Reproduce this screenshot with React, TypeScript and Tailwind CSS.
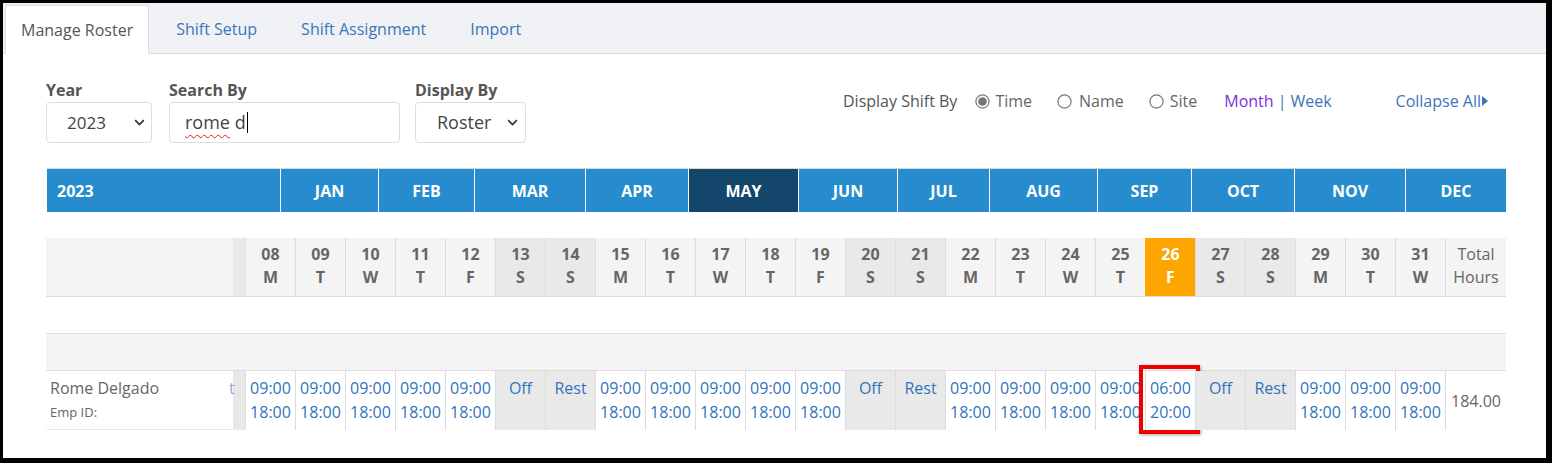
import React from "react";

const MONTHS = [
  { label: "JAN", w: "w-[98px]" },
  { label: "FEB", w: "w-[96px]" },
  { label: "MAR", w: "w-[111px]" },
  { label: "APR", w: "w-[103px]" },
  { label: "MAY", w: "w-[110px]", active: true },
  { label: "JUN", w: "w-[99px]" },
  { label: "JUL", w: "w-[92px]" },
  { label: "AUG", w: "w-[108px]" },
  { label: "SEP", w: "w-[94px]" },
  { label: "OCT", w: "w-[103px]" },
  { label: "NOV", w: "w-[111px]" },
  { label: "DEC", w: "w-[101px]" },
];

const WEEK = ["M", "T", "W", "T", "F", "S", "S"];

type Day = { date: string; dow: string; weekend: boolean; today: boolean; shift: string[] };

const DAYS: Day[] = Array.from({ length: 24 }, (_, i) => {
  const n = i + 8;
  const dow = WEEK[i % 7];
  const weekend = i % 7 >= 5;
  let shift = ["09:00", "18:00"];
  if (i % 7 === 5) shift = ["Off"];
  if (i % 7 === 6) shift = ["Rest"];
  if (n === 26) shift = ["06:00", "20:00"];
  return { date: String(n).padStart(2, "0"), dow, weekend, today: n === 26, shift };
});

function Chevron() {
  return (
    <svg width="11" height="7" viewBox="0 0 11 7" className="shrink-0">
      <path d="M1.2 1.2l4.3 4.3 4.3-4.3" fill="none" stroke="#333" strokeWidth="1.7" />
    </svg>
  );
}

function Radio({ checked }: { checked?: boolean }) {
  return (
    <svg width="15" height="15" viewBox="0 0 15 15" className="shrink-0">
      <circle cx="7.5" cy="7.5" r="6.6" fill="white" stroke="#767676" strokeWidth="1.2" />
      {checked ? <circle cx="7.5" cy="7.5" r="4.3" fill="#767676" /> : null}
    </svg>
  );
}

export default function App() {
  return (
    <div className="w-[1552px] h-[463px] overflow-hidden border-t-[3px] border-l-[3px] border-r-[6px] border-b-[5px] border-black bg-white font-['Open_Sans',sans-serif] text-[#555]">
      {/* tabs */}
      <div className="flex h-[51px] items-end gap-[10px] border-b border-[#dcdde2] bg-[#f0f1f5] pl-[2px]">
        <div className="-mb-px flex h-[49px] items-center rounded-t-[3px] border-x border-t border-[#dcdde2] bg-white px-[15px] text-[16px] text-[#555]">
          Manage Roster
        </div>
        {["Shift Setup", "Shift Assignment", "Import"].map((t) => (
          <div key={t} className="flex h-[49px] items-center px-[17px] text-[16px] text-[#3a76bb]">
            {t}
          </div>
        ))}
      </div>

      {/* filters */}
      <div className="flex pl-[43px] pt-[26px]">
        <div className="flex flex-col">
          <span className="text-[16px] font-bold leading-5 text-[#555]">Year</span>
          <div className="mt-[2px] flex h-[41px] w-[106px] items-center justify-between rounded-[4px] border border-[#dedede] pl-[20px] pr-[6px] text-[17px] text-[#444]">
            2023
            <Chevron />
          </div>
        </div>
        <div className="ml-[17px] flex flex-col">
          <span className="text-[16px] font-bold leading-5 text-[#555]">Search By</span>
          <div className="mt-[2px] flex h-[41px] w-[231px] items-center rounded-[4px] border border-[#dedede] pl-[15px] text-[18px] text-[#444]">
            <span className="underline decoration-wavy decoration-[#e02020] decoration-1 underline-offset-[5px]">rome</span>
            <span className="whitespace-pre"> d</span>
            <span className="ml-px h-[21px] border-l border-black" />
          </div>
        </div>
        <div className="ml-[15px] flex flex-col">
          <span className="text-[16px] font-bold leading-5 text-[#555]">Display By</span>
          <div className="mt-[2px] flex h-[41px] w-[111px] items-center justify-between rounded-[4px] border border-[#dedede] pl-[21px] pr-[7px] text-[18px] text-[#444]">
            Roster
            <Chevron />
          </div>
        </div>

        <div className="ml-[317px] mt-[9px] flex h-6 items-center self-start text-[16px] leading-6 text-[#555]">
          <span>Display Shift By</span>
          <span className="ml-[18px]">
            <Radio checked />
          </span>
          <span className="ml-[5px] text-[#666]">Time</span>
          <span className="ml-[25px]">
            <Radio />
          </span>
          <span className="ml-[7px] text-[#666]">Name</span>
          <span className="ml-[25px]">
            <Radio />
          </span>
          <span className="ml-[6px] text-[#666]">Site</span>
          <span className="ml-[27px] text-[#7b2fe0]">Month</span>
          <span className="ml-[4px] text-[#3a76bb]">|</span>
          <span className="ml-[4px] text-[#3a76bb]">Week</span>
          <span className="ml-[64px] flex items-center text-[#3a76bb]">
            Collapse All
            <svg width="6" height="10" viewBox="0 0 6 10" className="ml-[1px]">
              <path d="M0 0l6 5-6 5z" fill="#3a76bb" />
            </svg>
          </span>
        </div>
      </div>

      {/* month header */}
      <div className="ml-[44px] mt-[25px] flex h-[44px] w-[1459px] border-t border-[#d8d8d8] bg-[#268ccd] text-[16px] font-bold text-white">
        <div className="flex w-[233px] items-center pl-[10px]">2023</div>
        {MONTHS.map((m) => (
          <div
            key={m.label}
            className={`flex ${m.w} items-center justify-center border-l border-white ${m.active ? "bg-[#14466b]" : ""}`}
          >
            {m.label}
          </div>
        ))}
      </div>

      {/* day header */}
      <div className="ml-[43px] mt-[26px] flex h-[59px] w-[1460px] border-b border-[#dcdcdc] bg-[#f4f4f4]">
        <div className="w-[187px]" />
        <div className="w-[12px] bg-[#e8e8e8]" />
        {DAYS.map((d) => (
          <div
            key={d.date}
            className={`flex w-[50px] flex-col items-center border-l pt-[5px] text-[16px] font-bold leading-[23px] ${
              d.today
                ? "border-[#ffa500] bg-[#ffa500] text-white"
                : d.weekend
                  ? "border-[#dcdcdc] bg-[#e9e9e9] text-[#666]"
                  : "border-[#dcdcdc] text-[#666]"
            }`}
          >
            <span>{d.date}</span>
            <span>{d.dow}</span>
          </div>
        ))}
        <div className="flex w-[61px] flex-col items-center border-l border-[#dcdcdc] pt-[5px] text-[16px] leading-[23px] text-[#666]">
          <span>Total</span>
          <span>Hours</span>
        </div>
      </div>

      <div className="h-[36px]" />

      {/* group row */}
      <div className="ml-[43px] h-[38px] w-[1460px] border-y border-[#dcdcdc] bg-[#f4f4f4]" />

      {/* employee row */}
      <div className="ml-[43px] flex h-[59px] w-[1460px]">
        <div className="flex w-[187px] flex-col border-b border-[#efe6e8] bg-white pl-[4px] pt-[5px] leading-[24px]">
          <span className="text-[16px] text-[#666]">Rome Delgado</span>
          <span className="text-[13px] text-[#666]">Emp ID:</span>
        </div>
        <div className="w-[12px] bg-[#e8e8e8] pt-[5px] text-[16px] leading-[24px] text-[#8fa9c8]">
          <span className="-ml-[4px]">t</span>
        </div>
        {DAYS.map((d) => (
          <div
            key={d.date}
            className={`relative flex w-[50px] flex-col items-center border-l border-[#dcdcdc] pt-[5px] text-[16px] leading-[24px] text-[#2f74bc] ${
              d.weekend ? "bg-[#e9e9e9]" : "bg-white"
            }`}
          >
            {d.shift.map((s) => (
              <span key={s}>{s}</span>
            ))}
            {d.today ? (
              <div className="absolute -left-[7px] -top-[6px] h-[69px] w-[61px] border-[4px] border-[#ee0000] shadow-[1px_1px_3px_rgba(0,0,0,0.35)]" />
            ) : null}
          </div>
        ))}
        <div className="flex w-[61px] items-center justify-center border-l border-[#dcdcdc] text-[16px] text-[#666]">
          184.00
        </div>
      </div>
    </div>
  );
}
